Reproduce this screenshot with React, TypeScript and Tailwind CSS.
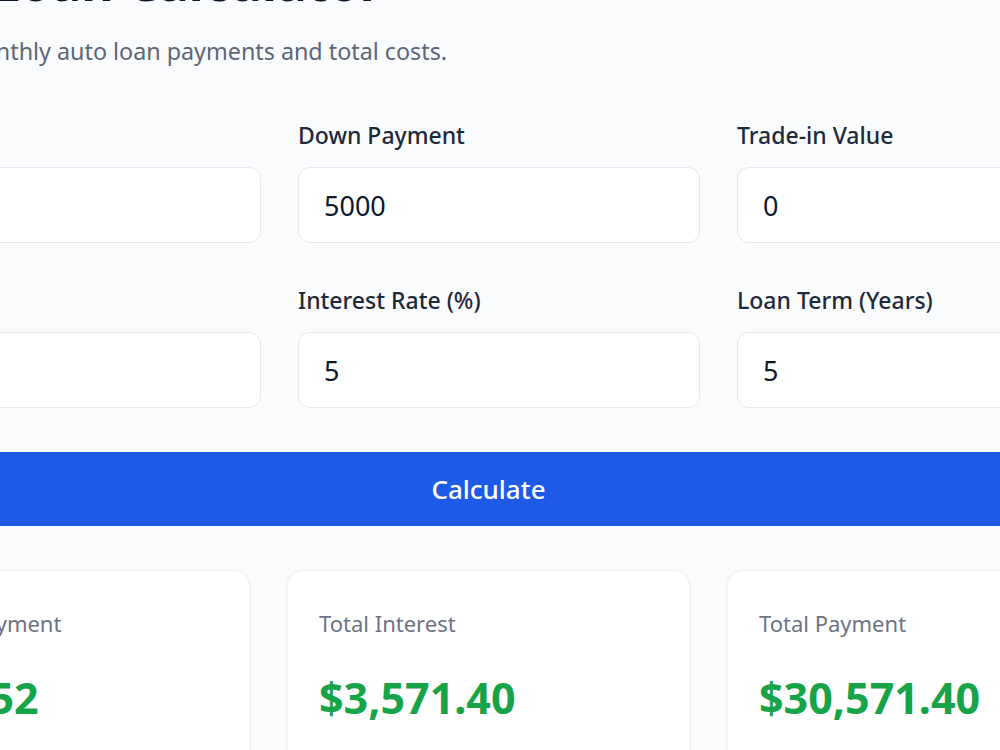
import { useState } from 'react';

type Field = { key: string; label: string; value: string };

const fields: Field[] = [
	{ key: 'price', label: 'Vehicle Price', value: '32000' },
	{ key: 'down', label: 'Down Payment', value: '5000' },
	{ key: 'trade', label: 'Trade-in Value', value: '0' },
	{ key: 'tax', label: 'Sales Tax (%)', value: '0' },
	{ key: 'rate', label: 'Interest Rate (%)', value: '5' },
	{ key: 'term', label: 'Loan Term (Years)', value: '5' },
];

const money = (n: number) =>
	'$' + n.toLocaleString('en-US', { minimumFractionDigits: 2, maximumFractionDigits: 2 });

// 简单的月供计算
const calc = (v: Record<string, string>) => {
	const price = Number(v.price) || 0;
	const tax = (Number(v.tax) || 0) / 100;
	const principal = price * (1 + tax) - (Number(v.down) || 0) - (Number(v.trade) || 0);
	const r = (Number(v.rate) || 0) / 100 / 12;
	const n = (Number(v.term) || 0) * 12;
	const monthly = r === 0 ? principal / n : (principal * r) / (1 - Math.pow(1 + r, -n));
	const total = monthly * n;
	return { monthly, interest: total - principal, total };
};

export default function App() {
	const [values, setValues] = useState<Record<string, string>>(
		Object.fromEntries(fields.map((f) => [f.key, f.value])),
	);
	const [result, setResult] = useState(() => calc(values));

	const cards = [
		{ label: 'Monthly Payment', value: money(result.monthly) },
		{ label: 'Total Interest', value: money(result.interest) },
		{ label: 'Total Payment', value: money(result.total) },
	];

	return (
		<div className="h-[750px] w-full overflow-hidden bg-[#fafbfc] font-['Noto_Sans',sans-serif]">
			<div className="ml-[-153px] w-[1283px]">
				<div className="ml-[12px] w-[1280px]">
					<header>
						<h1 className="mt-[-46px] text-[50px] leading-[56px] font-bold text-[#0f172a]">
							Auto Loan Calculator
						</h1>
						<p className="mt-[25px] text-[23.3px] leading-[32px] text-[#5b6678]">
							Estimate monthly auto loan payments and total costs.
						</p>
					</header>

					<div className="mt-[53px] grid grid-cols-3 gap-x-[37px] gap-y-[42px]">
						{fields.map((f) => (
							<label key={f.key} className="flex flex-col">
								<span className="text-[23px] leading-[30px] font-medium text-[#1e293b]">
									{f.label}
								</span>
								<input
									className="mt-[17px] h-[76px] rounded-[12px] border border-[#e6e8ee] bg-white pl-[25px] text-[27px] text-[#0f172a] outline-none"
									value={values[f.key]}
									onChange={(e) => setValues({ ...values, [f.key]: e.target.value })}
								/>
							</label>
						))}
					</div>
				</div>

				<button
					className="mt-[44px] h-[74px] w-full rounded-[10px] bg-[#1d5ae6] text-[26px] font-medium text-white"
					onClick={() => setResult(calc(values))}
				>
					Calculate
				</button>

				<div className="mt-[44px] grid grid-cols-3 gap-x-[37px]">
					{cards.map((c) => (
						<div
							key={c.label}
							className="h-[240px] rounded-[16px] border border-[#eef0f3] bg-white px-[31px] pt-[37px] shadow-[0_1px_4px_rgba(15,23,42,0.05)]"
						>
							<p className="text-[22px] leading-[30px] text-[#6b7384]">{c.label}</p>
							<p className="mt-[34px] text-[43px] leading-[52px] font-bold text-[#17a347]">
								{c.value}
							</p>
						</div>
					))}
				</div>
			</div>
		</div>
	);
}
